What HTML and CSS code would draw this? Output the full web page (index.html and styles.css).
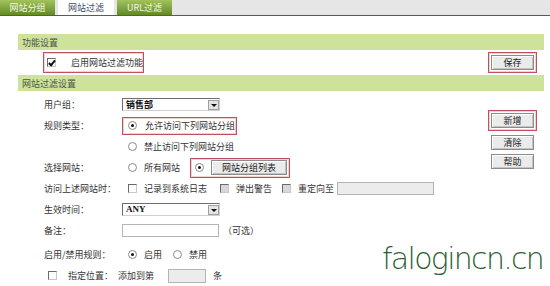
FILE: index.html
```html
<!DOCTYPE html>
<html lang="zh-CN">
<head>
    <meta charset="UTF-8">
    <title>网站过滤</title>
    <link rel="stylesheet" href="styles.css">
</head>
<body>
    <div class="tabs">
        <div class="tab">网站分组</div>
        <div class="tab active">网站过滤</div>
        <div class="tab">URL过滤</div>
    </div>

    <div class="panel">
        <div class="section-title">功能设置</div>
        <div class="func-row">
            <label class="mark enable-box"><span class="checkbox checked"></span>启用网站过滤功能</label>
            <span class="mark"><button class="btn">保存</button></span>
        </div>

        <div class="section-title">网站过滤设置</div>
        <div class="filter">
            <div class="rows">
                <div class="row">
                    <span class="label">用户组：</span>
                    <div class="field">
                        <div class="select">销售部<span class="arrow"></span></div>
                    </div>
                </div>
                <div class="row">
                    <span class="label">规则类型：</span>
                    <div class="field">
                        <label class="mark rule-box"><span class="radio checked"></span>允许访问下列网站分组</label>
                    </div>
                </div>
                <div class="row">
                    <span class="label"></span>
                    <div class="field">
                        <label class="opt"><span class="radio"></span>禁止访问下列网站分组</label>
                    </div>
                </div>
                <div class="row">
                    <span class="label">选择网站：</span>
                    <div class="field">
                        <label class="opt all-sites"><span class="radio"></span>所有网站</label>
                        <span class="mark group-box"><span class="radio checked"></span><button class="btn list-btn">网站分组列表</button></span>
                    </div>
                </div>
                <div class="row">
                    <span class="label">访问上述网站时：</span>
                    <div class="field">
                        <label class="opt log"><span class="checkbox"></span>记录到系统日志</label>
                        <label class="opt alert"><span class="checkbox off"></span>弹出警告</label>
                        <label class="opt redirect"><span class="checkbox off"></span>重定向至</label>
                        <span class="input url"></span>
                    </div>
                </div>
                <div class="row">
                    <span class="label">生效时间：</span>
                    <div class="field">
                        <div class="select any">ANY<span class="arrow"></span></div>
                    </div>
                </div>
                <div class="row">
                    <span class="label">备注：</span>
                    <div class="field">
                        <span class="input note"></span>
                        <span class="hint">（可选）</span>
                    </div>
                </div>
                <div class="row state">
                    <span class="label">启用/禁用规则：</span>
                    <div class="field">
                        <label class="opt on"><span class="radio checked"></span>启用</label>
                        <label class="opt"><span class="radio"></span>禁用</label>
                    </div>
                </div>
                <div class="row last">
                    <span class="checkbox"></span>
                    <span class="pos-label">指定位置：</span>
                    <span>添加到第</span>
                    <span class="input index"></span>
                    <span>条</span>
                </div>
            </div>
            <div class="side">
                <span class="mark"><button class="btn">新增</button></span>
                <button class="btn">清除</button>
                <button class="btn">帮助</button>
            </div>
        </div>
    </div>

    <div class="watermark">falogincn.cn</div>
</body>
</html>
```

FILE: styles.css
```css
body {
    margin: 0;
    width: 550px;
    height: 286px;
    background-color: #ffffff;
    color: #333333;
    font-family: "Noto Sans CJK SC", "Liberation Sans", sans-serif;
    font-size: 9px;
    line-height: 1;
    white-space: nowrap;
    overflow: hidden;
    position: relative;
}

.tabs {
    display: flex;
    gap: 3px;
    height: 15px;
    background-color: #e6e6e6;
    border-bottom: 1px solid #5a5a5a;
}

.tab {
    width: 55px;
    display: flex;
    justify-content: center;
    align-items: center;
    color: #f2f6e8;
    background: linear-gradient(#a3c25e, #618b24);
}

.tab.active {
    width: 56px;
    color: #3d4d6a;
    background: #ffffff;
}

.panel {
    padding: 0 6px 0 18px;
}

.section-title {
    height: 16px;
    margin-top: 18px;
    padding-left: 4px;
    display: flex;
    align-items: center;
    background-color: #cee29c;
    color: #4d5545;
}

.func-row + .section-title {
    margin-top: 1px;
}

/* red outline around the highlighted controls */
.mark {
    display: inline-flex;
    align-items: center;
    border: 1px solid #c0505c;
    box-shadow: inset 0 0 0 1px #efd0d3;
    padding: 2px;
}

.func-row {
    display: flex;
    justify-content: space-between;
    align-items: center;
    height: 24px;
    padding: 0 7px 0 25px;
}

.enable-box {
    width: 101px;
    height: 21px;
    box-sizing: border-box;
    padding-left: 3px;
    gap: 15px;
}

.btn {
    width: 43px;
    height: 15px;
    padding: 0;
    font-family: inherit;
    font-size: 9px;
    line-height: 1;
    color: #222222;
    background-color: #ebebeb;
    border: 1px solid #8c8c8c;
    box-shadow: inset 1px 1px #ffffff, inset -1px -1px #c4c4c4;
}

.filter {
    display: flex;
    padding-top: 3px;
}

.rows {
    flex: 1;
    padding-left: 26px;
}

.row {
    display: grid;
    grid-template-columns: 78px 1fr;
    align-items: center;
    height: 21px;
}

.row.state {
    margin-top: 3px;
}

.field {
    display: flex;
    align-items: center;
}

.select {
    width: 98px;
    height: 13px;
    box-sizing: border-box;
    display: flex;
    align-items: center;
    justify-content: space-between;
    padding-left: 3px;
    border: 1px solid #6e6e6e;
    border-right-color: #d0d0d0;
    border-bottom-color: #d0d0d0;
    color: #111111;
    font-weight: bold;
}

.select.any {
    font-family: "Liberation Serif", serif;
    font-size: 9px;
}

.arrow {
    width: 11px;
    height: 10px;
    box-sizing: border-box;
    border: 1px solid #a0a0a0;
    background-color: #e4e4e4;
    position: relative;
}

.arrow::after {
    content: "";
    position: absolute;
    left: 2px;
    top: 3px;
    border-left: 3px solid transparent;
    border-right: 3px solid transparent;
    border-top: 3px solid #111111;
}

.radio {
    width: 9px;
    height: 9px;
    box-sizing: border-box;
    border-radius: 50%;
    border: 1px solid #8a8a8a;
    background-color: #ffffff;
    position: relative;
    flex: none;
}

.radio.checked::after {
    content: "";
    position: absolute;
    left: 2px;
    top: 2px;
    width: 3px;
    height: 3px;
    border-radius: 50%;
    background-color: #111111;
}

.checkbox {
    width: 9px;
    height: 9px;
    box-sizing: border-box;
    border: 1px solid #6a6a6a;
    border-right-color: #c8c8c8;
    border-bottom-color: #c8c8c8;
    background-color: #ffffff;
    position: relative;
    flex: none;
}

.checkbox.off {
    background-color: #d8d8d8;
}

.checkbox.checked::after {
    content: "";
    position: absolute;
    left: 2px;
    top: 0;
    width: 2px;
    height: 5px;
    border-right: 2px solid #111111;
    border-bottom: 2px solid #111111;
    transform: rotate(40deg);
}

.opt {
    display: inline-flex;
    align-items: center;
    gap: 7px;
    margin-left: 6px;
}

.rule-box {
    width: 115px;
    height: 18px;
    box-sizing: border-box;
    padding-left: 5px;
    gap: 8px;
}

.all-sites {
    width: 62px;
}

.group-box {
    width: 100px;
    height: 20px;
    box-sizing: border-box;
    padding-left: 4px;
    gap: 7px;
}

.list-btn {
    width: 79px;
    height: 15px;
}

.log {
    width: 86px;
}

.alert {
    width: 56px;
}

.redirect {
    width: 48px;
}

.input {
    display: inline-block;
    height: 13px;
    box-sizing: border-box;
    border: 1px solid #b4b4b4;
    background-color: #ececec;
}

.url {
    width: 97px;
    margin-left: 7px;
}

.note {
    width: 97px;
    background-color: #ffffff;
}

.hint {
    margin-left: 4px;
}

.on {
    width: 39px;
}

.row.last {
    display: flex;
    gap: 0;
}

.row.last .checkbox {
    margin-left: 4px;
}

.pos-label {
    margin-left: 11px;
    margin-right: 5px;
}

.index {
    width: 38px;
    height: 14px;
    margin: 0 7px 0 14px;
}

.side {
    width: 49px;
    margin-right: 7px;
    padding-top: 16px;
    display: flex;
    flex-direction: column;
    align-items: center;
    gap: 4px;
}

.watermark {
    position: absolute;
    left: 382px;
    top: 244px;
    font-family: "DejaVu Sans", sans-serif;
    font-weight: 200;
    font-size: 30px;
    letter-spacing: -1.7px;
    color: #2f5f34;
}
```
